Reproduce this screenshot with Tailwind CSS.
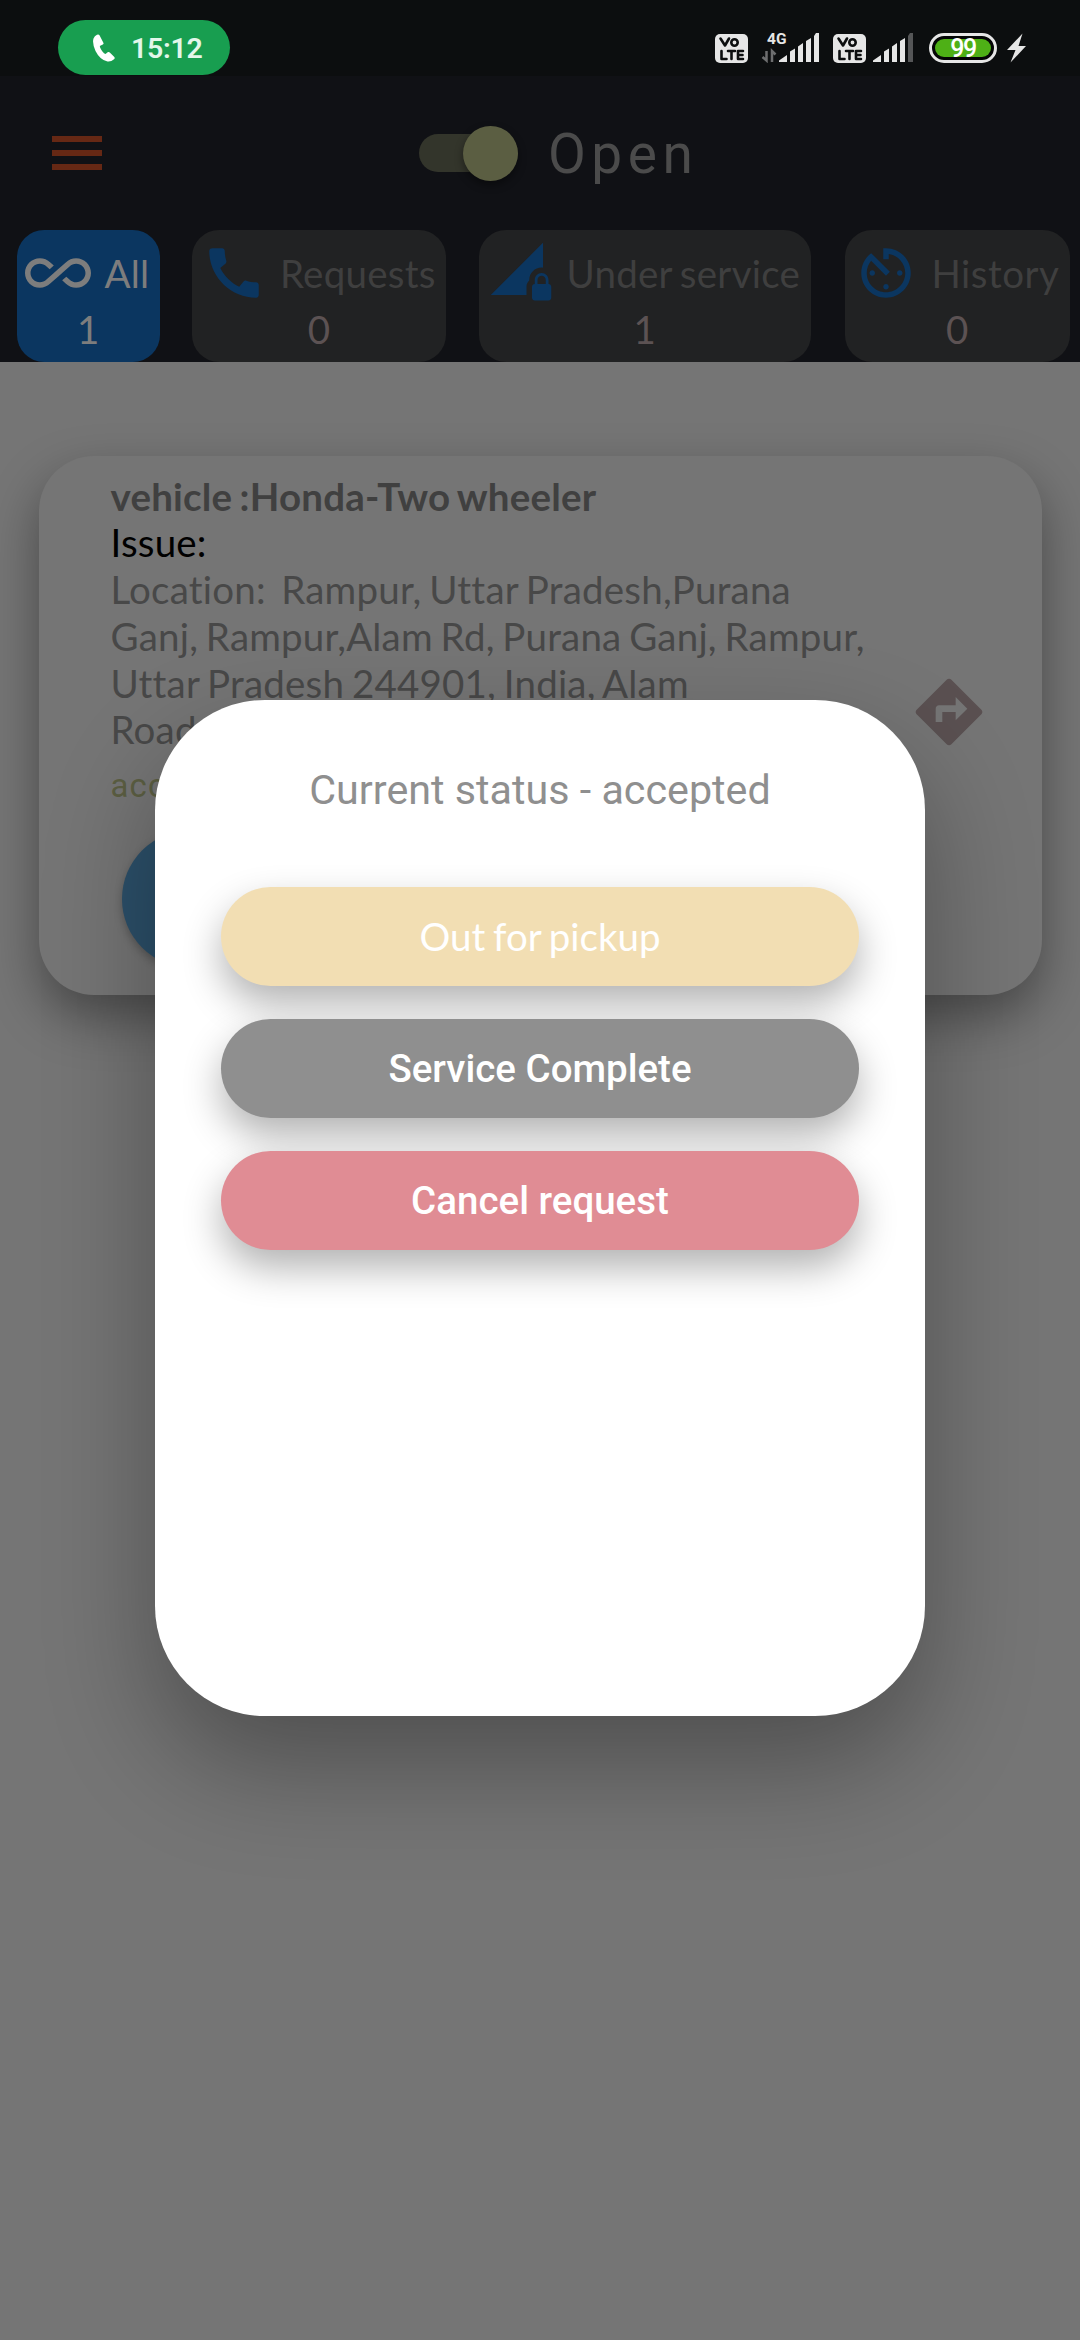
<!DOCTYPE html>
<html lang="en">
<head>
<meta charset="utf-8">
<title>Service requests</title>
<script src="https://cdn.jsdelivr.net/npm/@tailwindcss/browser@4"></script>
</head>
<body class="relative h-[2340px] w-[1080px] overflow-hidden bg-[#757575] font-['Lato',sans-serif] [font-variant-ligatures:none]">

<!-- Status bar -->
<div class="flex h-[76px] items-start justify-between bg-[#0c0e0f] pl-[58px] pr-[53px] pt-5 font-['Roboto',sans-serif]">
  <div class="flex h-[55px] w-[172px] items-center rounded-full bg-[#189e50] pl-[35px]">
    <svg class="h-7 w-[22px]" viewBox="0 0 22 28" fill="#fff"><path d="M4 .8Q5.500 0 6.500 1.200L10.500 9Q10.800 10 9.800 10.500L6.800 12Q7 15 11 19.300L12.500 20L15 18Q16 17.600 16.800 18.500L21.300 23Q22.200 24.200 21 25.300Q18 28 14.500 27.500Q7 26 2.500 17Q-1 9 .5 4.500Q1.500 2 4 .8Z"/></svg>
    <span class="ml-[16px] pt-[3px] text-[28.5px] font-semibold leading-none tracking-[-0.3px] text-[#e3f7ea]">15:12</span>
  </div>
  <div class="flex h-[55px] items-start pt-[11px] text-[#e6e6e6]">
    <svg class="h-8 w-[312px]" viewBox="0 0 312 32" fill="#e6e6e6">
      <g id="volte">
        <rect x="0" y="3" width="33" height="29" rx="5"/>
        <g fill="none" stroke="#0c0e0f" stroke-width="2.600" stroke-linecap="round" stroke-linejoin="round">
          <path d="M5.500 7.500L10 14.500L14 7.500"/><circle cx="19.500" cy="11.500" r="3.200"/>
          <path d="M6.500 20V28H11.500M13 20H20M16.500 20V28M28 20H23V28H28M23 24H27.500"/>
        </g>
      </g>
      <use href="#volte" x="118"/>
      <text x="52" y="12.500" font-size="15.500" font-weight="700">4G</text>
      <path d="M51.500 20V29.500L47.500 26M57 31V20L60.500 23.500" fill="none" stroke="#6d6e6f" stroke-width="2.500"/>
      <path id="bars" d="M64 31V29.500L72 24V31ZM75 31V20.500L80 17.500V31ZM83 31V15.500L88 12V31ZM91 31V10L96 7V31Z"/>
      <path d="M99 31V5L101 2H104V31Z"/>
      <use href="#bars" x="94"/>
      <path d="M193 31V5L195 2H198V31Z" fill="#555657"/>
      <rect x="215.500" y="3.500" width="65" height="27" rx="13.500" fill="#050606" stroke="#e6e6e6" stroke-width="3"/>
      <rect x="220" y="8" width="56" height="18" rx="9" fill="#4eb016"/>
      <text x="248" y="25.700" font-size="25" font-weight="500" text-anchor="middle" letter-spacing="-1.500" fill="#fff">99</text>
      <path d="M307.500 2.500L292 19H300.500L295.500 31.500L311 15H303.500Z"/>
    </svg>
  </div>
</div>

<!-- App header -->
<header class="h-[286px] bg-[#101115]">
  <div class="flex h-[154px] items-center pl-[52px]">
    <div class="flex w-[50px] flex-col gap-2">
      <div class="h-1.5 bg-[#662814]"></div>
      <div class="h-1.5 bg-[#662814]"></div>
      <div class="h-1.5 bg-[#662814]"></div>
    </div>
    <div class="ml-[317px] flex h-[38px] w-[99px] items-center justify-end rounded-full bg-[#33352b]">
      <div class="size-[55px] shrink-0 rounded-full bg-[#5b5e42] shadow-[0_4px_8px_rgba(0,0,0,0.4)]"></div>
    </div>
    <span class="ml-[30px] pt-[3px] font-['Roboto',sans-serif] text-[55px] leading-none tracking-[5.5px] text-[#4b4b4b]">Open</span>
  </div>
  <nav class="flex h-[132px] pl-[16.5px] text-[38.500px] leading-[46px] tracking-[0.25px] [word-spacing:-2.3px]">
    <div class="flex w-[143.5px] shrink-0 flex-col rounded-[27px] bg-[#0b3660] pl-2 pt-[10px] text-[#7d7d7d]">
      <div class="flex h-[66px] items-center gap-[14px] whitespace-nowrap">
        <svg class="size-[66px] shrink-0" viewBox="0 0 24 24" fill="currentColor"><path d="M18.600 6.620c-1.440 0-2.800.56-3.770 1.530L12 10.660 10.480 12h.01L7.800 14.390c-.64.64-1.490.99-2.400.99-1.870 0-3.390-1.510-3.390-3.380S3.530 8.620 5.400 8.620c.91 0 1.760.35 2.440 1.030l1.130 1 1.510-1.340L9.220 8.200C8.200 7.180 6.840 6.620 5.400 6.620 2.420 6.620 0 9.040 0 12s2.420 5.380 5.400 5.380c1.440 0 2.800-.56 3.770-1.530l2.830-2.500.01.01L13.520 12h-.01l2.690-2.390c.64-.64 1.490-.99 2.400-.99 1.870 0 3.390 1.510 3.390 3.380s-1.520 3.380-3.390 3.380c-.9 0-1.760-.35-2.440-1.030l-1.140-1.010-1.510 1.340 1.270 1.120c1.020 1.010 2.370 1.570 3.820 1.570 2.980 0 5.400-2.410 5.400-5.380s-2.420-5.370-5.400-5.370z"/></svg>
        <span>All</span>
      </div>
      <span class="-ml-2 text-center">1</span>
    </div>
    <div class="ml-8 flex w-[254px] shrink-0 flex-col rounded-[27px] bg-[#212223] pl-[9px] pt-[10px] text-[#3f3f3f]">
      <div class="flex h-[66px] items-center gap-[13px] whitespace-nowrap">
        <svg class="size-[66px] shrink-0" viewBox="0 0 24 24" fill="#0b3660"><path d="M20.010 15.380c-1.230 0-2.420-.2-3.530-.56-.35-.12-.74-.03-1.010.24l-1.570 1.970c-2.830-1.350-5.480-3.900-6.890-6.830l1.950-1.660c.27-.28.35-.67.24-1.020-.37-1.110-.56-2.300-.56-3.530 0-.54-.45-.99-.99-.99H4.190C3.650 3 3 3.240 3 3.990 3 13.280 10.730 21 20.010 21c.71 0 .99-.63.99-1.180v-3.450c0-.54-.45-.99-.99-.99z"/></svg>
        <span>Requests</span>
      </div>
      <span class="-ml-[9px] text-center text-[#5c5253]">0</span>
    </div>
    <div class="ml-[32.500px] flex w-[332.500px] shrink-0 flex-col rounded-[27px] bg-[#212223] pl-[9px] pt-[10px] text-[#3f3f3f]">
      <div class="flex h-[66px] items-center gap-[13px] whitespace-nowrap">
        <svg class="size-[66px] shrink-0" viewBox="0 0 24 24" fill="#0b3660"><path d="M19.500 10c.17 0 .33.03.5.05V1L1 20h13v-3c0-.89.39-1.680 1-2.230v-.27c0-2.480 2.020-4.500 4.500-4.500zm2.500 6v-1.500c0-1.380-1.120-2.500-2.500-2.500S17 13.120 17 14.500V16c-.55 0-1 .45-1 1v4c0 .55.45 1 1 1h5c.55 0 1-.45 1-1v-4c0-.55-.45-1-1-1zm-1 0h-3v-1.500c0-.83.67-1.500 1.500-1.500s1.500.67 1.500 1.500V16z"/></svg>
        <span>Under service</span>
      </div>
      <span class="-ml-[9px] text-center text-[#5c5253]">1</span>
    </div>
    <div class="ml-[33.500px] flex w-[225.500px] shrink-0 flex-col rounded-[27px] bg-[#212223] pl-2 pt-[10px] text-[#3f3f3f]">
      <div class="flex h-[66px] items-center gap-[13px] whitespace-nowrap">
        <svg class="size-[66px] shrink-0" viewBox="0 0 24 24" fill="#0b3660"><path d="M11 17c0 .55.45 1 1 1s1-.45 1-1-.45-1-1-1-1 .45-1 1zm0-14v4h2V5.080c3.390.49 6 3.390 6 6.920 0 3.870-3.130 7-7 7s-7-3.130-7-7c0-1.680.59-3.220 1.580-4.420L12 13l1.410-1.410-6.800-6.800v.02C4.420 6.450 3 9.050 3 12c0 4.970 4.020 9 9 9 4.970 0 9-4.030 9-9s-4.030-9-9-9h-1zm7 9c0-.55-.45-1-1-1s-1 .45-1 1 .45 1 1 1 1-.45 1-1zM6 12c0 .55.45 1 1 1s1-.45 1-1-.45-1-1-1-1 .45-1 1z"/></svg>
        <span class="tracking-[0.5px]">History</span>
      </div>
      <span class="-ml-2 text-center text-[#5c5253]">0</span>
    </div>
  </nav>
</header>

<!-- Request card -->
<main class="px-[38.500px] pt-[93.500px]">
  <section class="flex h-[539px] justify-between rounded-[55px] bg-[#757575] pl-[72px] pr-[53px] pt-[17px] shadow-[0_22px_50px_rgba(0,0,0,0.38)]">
    <div class="whitespace-nowrap text-[38.500px] leading-[46.750px] tracking-[0.2px] text-[#484848] [word-spacing:-2.3px]">
      <p class="font-bold text-[#404040]">vehicle :Honda-Two wheeler</p>
      <p class="text-black">Issue:</p>
      <p>Location:&nbsp; Rampur, Uttar Pradesh,Purana<br>Ganj, Rampur,Alam Rd, Purana Ganj, Rampur,<br>Uttar Pradesh 244901, India, Alam<br>Road</p>
      <p class="mt-[10px] font-['Roboto',sans-serif] text-[33px] tracking-[1.1px] text-[#5b5e42]">accepted</p>
      <div class="ml-[11px] mt-5 size-[138px] rounded-full bg-[#2c506a] shadow-[0_4px_8px_rgba(0,0,0,0.25)]"></div>
    </div>
    <svg class="mt-[199px] size-[80px]" viewBox="0 0 24 24" fill="#5a5051"><path d="M21.710 11.290l-9-9c-.39-.39-1.020-.39-1.410 0l-9 9c-.39.39-.39 1.020 0 1.410l9 9c.39.39 1.020.39 1.410 0l9-9c.39-.38.39-1.010 0-1.410zM14 14.500V12h-4v3H8v-4c0-.55.45-1 1-1h5V7.500l3.500 3.500-3.500 3.500z"/></svg>
  </section>
</main>

<!-- Status dialog -->
<div role="dialog" class="absolute left-[155px] top-[700px] flex h-[1016px] w-[770px] flex-col items-center rounded-[110px] bg-white pt-[66px] text-[38.500px] text-white shadow-[0_50px_110px_rgba(0,0,0,0.32)]">
  <h2 class="font-['Roboto',sans-serif] text-[41.25px] leading-[48px] text-[#8f8f8f]">Current status - accepted</h2>
  <div class="mt-[72.500px] flex w-[638px] flex-col gap-[33px]">
    <button class="h-[99px] rounded-full bg-[#f2deb3] pt-px [word-spacing:-2px] shadow-[0_18px_38px_rgba(0,0,0,0.3)]">Out for pickup</button>
    <button class="h-[99px] rounded-full bg-[#8f8f8f] pt-0.5 font-['Roboto',sans-serif] font-medium shadow-[0_18px_38px_rgba(0,0,0,0.3)]">Service Complete</button>
    <button class="h-[99px] rounded-full bg-[#e08c94] pt-0.5 font-['Roboto',sans-serif] font-medium shadow-[0_18px_38px_rgba(0,0,0,0.3)]">Cancel request</button>
  </div>
</div>

</body>
</html>
